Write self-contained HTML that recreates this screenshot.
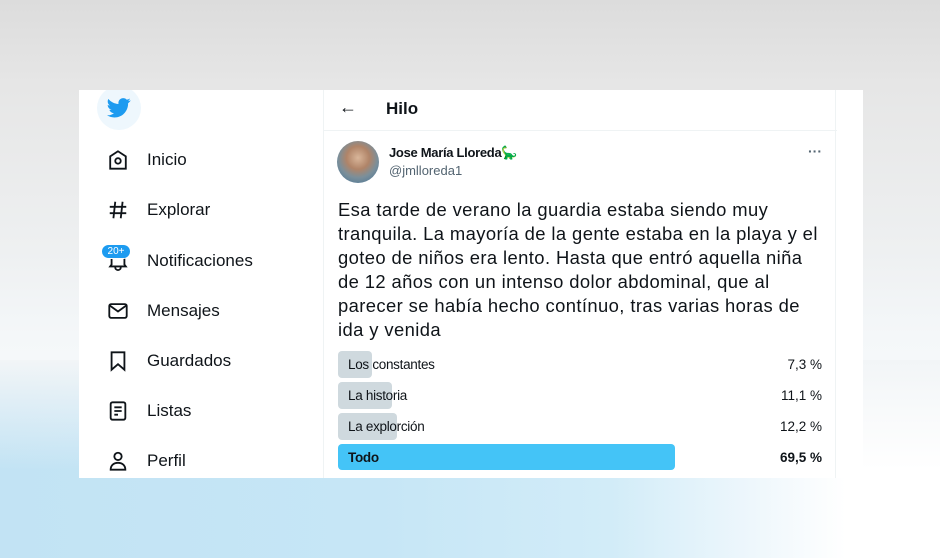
<!DOCTYPE html>
<html><head><meta charset="utf-8"><style>
*{margin:0;padding:0;box-sizing:border-box}
body{width:940px;height:558px;overflow:hidden;position:relative;font-family:"Liberation Sans",sans-serif;
background:linear-gradient(180deg,#dcdcdc 0%,#e6e6e6 15%,#eef0f1 45%,#f4f7f9 60%,#fff 100%);}
.blue{position:absolute;left:0;top:360px;width:940px;height:198px;
background:linear-gradient(90deg,#c2e3f4 0%,#c6e6f6 40%,#d2ecf8 65%,#eef7fc 80%,#fff 90%);}
.blue2{position:absolute;left:0;top:360px;width:940px;height:110px;background:linear-gradient(180deg,rgba(242,245,247,1),rgba(242,245,247,0))}
.card{position:absolute;left:79px;top:90px;width:784px;height:388px;background:#fff;overflow:hidden}
.main{position:absolute;left:244px;top:0;width:513px;height:388px;border-left:1px solid #eff3f4;border-right:1px solid #eff3f4}
.nav{position:absolute;left:68px;font-size:17px;color:#0f1419}
.ic{position:absolute;left:28px;width:22px;height:22px}
.t{position:absolute;color:#0f1419}
.bar{position:absolute;left:14px;height:27px;background:#cfd9de;border-radius:4px}
.lbl{position:absolute;left:24px;font-size:13.5px;color:#0f1419;letter-spacing:-0.3px}
.pct{position:absolute;right:13px;font-size:13.5px;color:#0f1419}
.tx div{white-space:nowrap;letter-spacing:0.4px}
</style></head><body>
<div class="blue"></div><div class="blue2"></div>
<div class="card">
 <div style="position:absolute;left:18px;top:-4px;width:44px;height:44px;border-radius:50%;background:#eef7fd"></div>
 <svg style="position:absolute;left:28px;top:8px" width="24" height="20" viewBox="0 0 24 20"><path fill="#1d9bf0" d="M23.6 2.4c-.9.4-1.8.6-2.8.8 1-.6 1.8-1.5 2.1-2.7-.9.6-2 1-3.1 1.2C18.9.7 17.6.1 16.2.1c-2.7 0-4.8 2.2-4.8 4.8 0 .4 0 .8.1 1.1C7.4 5.8 3.800 3.9 1.4 1 1 1.7.7 2.6.7 3.5c0 1.7.9 3.2 2.2 4-.8 0-1.5-.2-2.2-.6v.1c0 2.3 1.7 4.3 3.9 4.7-.4.1-.8.2-1.300.2-.3 0-.6 0-.9-.1.6 1.9 2.4 3.3 4.5 3.4-1.7 1.3-3.7 2.1-6 2.1H0c2.1 1.4 4.7 2.2 7.4 2.2 8.9 0 13.7-7.4 13.7-13.7v-.6c1-.7 1.8-1.6 2.5-2.6z"/></svg>

 <svg class="ic" style="top:59px" viewBox="0 0 24 24" fill="none" stroke="#0f1419" stroke-width="2"><path d="M12 2.5 3.5 8v13.5h17V8z"/><circle cx="12" cy="13" r="3"/></svg>
 <div class="nav" style="top:60px">Inicio</div>
 <svg class="ic" style="top:109px" viewBox="0 0 24 24" fill="none" stroke="#0f1419" stroke-width="2"><path d="M9 3 7 21M17 3l-2 18M3 8.5h18M3 15.5h18"/></svg>
 <div class="nav" style="top:110px">Explorar</div>
 <svg class="ic" style="top:159px" viewBox="0 0 24 24" fill="none" stroke="#0f1419" stroke-width="2"><path d="M5 17V10a7 7 0 0 1 14 0v7l1.5 2h-17zM9 20a3 3 0 0 0 6 0"/></svg>
 <div style="position:absolute;left:22px;top:154px;width:30px;height:15px;border-radius:8px;background:#1d9bf0;border:1px solid #fff;color:#fff;font-size:10px;text-align:center;line-height:13px">20+</div>
 <div class="nav" style="top:161px">Notificaciones</div>
 <svg class="ic" style="top:210px" viewBox="0 0 24 24" fill="none" stroke="#0f1419" stroke-width="2"><rect x="2.5" y="4.5" width="19" height="15" rx="2"/><path d="M3 6l9 6.5L21 6"/></svg>
 <div class="nav" style="top:211px">Mensajes</div>
 <svg class="ic" style="top:260px" viewBox="0 0 24 24" fill="none" stroke="#0f1419" stroke-width="2"><path d="M5 2.5h14v19l-7-6-7 6z"/></svg>
 <div class="nav" style="top:261px">Guardados</div>
 <svg class="ic" style="top:310px" viewBox="0 0 24 24" fill="none" stroke="#0f1419" stroke-width="2"><rect x="4" y="2.5" width="16" height="19" rx="2"/><path d="M8 8h8M8 12h8M8 16h4"/></svg>
 <div class="nav" style="top:311px">Listas</div>
 <svg class="ic" style="top:360px" viewBox="0 0 24 24" fill="none" stroke="#0f1419" stroke-width="2"><circle cx="12" cy="7" r="4"/><path d="M4 21.5c0-5 3.5-7.5 8-7.5s8 2.5 8 7.5z"/></svg>
 <div class="nav" style="top:361px">Perfil</div>

 <div class="main">
  <div style="position:absolute;left:0;top:40px;width:513px;border-top:1px solid #eff3f4"></div>
  <div class="t" style="left:15px;top:7px;font-size:18px">&#8592;</div>
  <div class="t" style="left:62px;top:9px;font-size:17px;font-weight:bold">Hilo</div>
  <div style="position:absolute;left:13px;top:51px;width:42px;height:42px;border-radius:50%;background:radial-gradient(circle at 50% 40%,#d9b69a 0%,#b08468 35%,#7b8f9a 60%,#3f6f95 100%)"></div>
  <div class="t" style="left:65px;top:55px;font-size:13px;font-weight:bold;letter-spacing:-0.3px">Jose María Lloreda<span style="color:#3fa34d">&#x1F995;</span></div>
  <div class="t" style="left:65px;top:73px;font-size:13px;color:#536471">@jmlloreda1</div>
  <div class="t" style="left:484px;top:53px;font-size:14px;font-weight:bold;color:#536471">···</div>
  <div class="t tx" style="left:14px;top:108px;font-size:18.4px;line-height:24px">
   <div>Esa tarde de verano la guardia estaba siendo muy</div>
   <div>tranquila. La mayoría de la gente estaba en la playa y el</div>
   <div>goteo de niños era lento. Hasta que entró aquella niña</div>
   <div>de 12 años con un intenso dolor abdominal, que al</div>
   <div>parecer se había hecho contínuo, tras varias horas de</div>
   <div>ida y venida</div>
  </div>
  <div class="bar" style="top:261px;width:34px"></div><div class="lbl" style="top:267px">Los constantes</div><div class="pct" style="top:267px">7,3 %</div>
  <div class="bar" style="top:292px;width:54px"></div><div class="lbl" style="top:298px">La historia</div><div class="pct" style="top:298px">11,1 %</div>
  <div class="bar" style="top:323px;width:59px"></div><div class="lbl" style="top:329px">La explorción</div><div class="pct" style="top:329px">12,2 %</div>
  <div class="bar" style="top:354px;width:337px;height:26px;background:#44c4f7"></div><div class="lbl" style="top:360px;font-weight:bold">Todo</div><div class="pct" style="top:360px;font-weight:bold">69,5 %</div>
 </div>
</div>
</body></html>
